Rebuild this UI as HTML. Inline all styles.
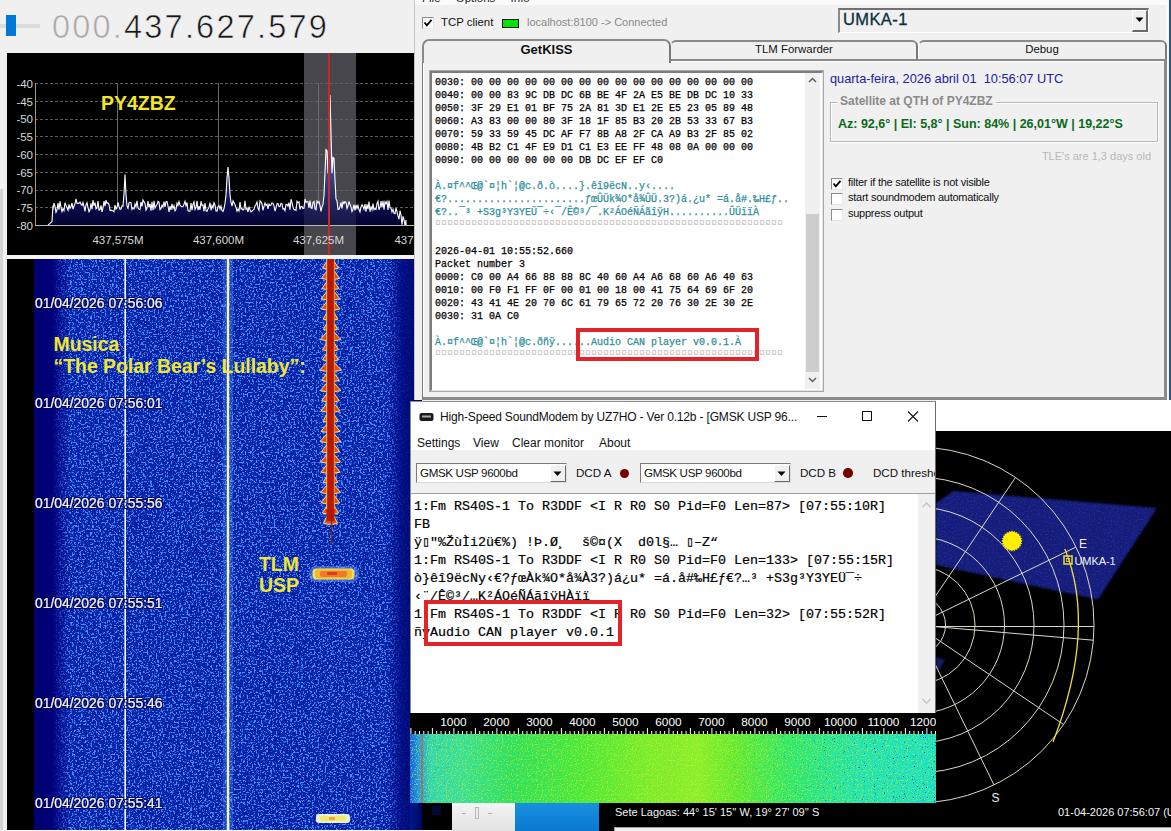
<!DOCTYPE html>
<html><head><meta charset="utf-8">
<style>
*{margin:0;padding:0;box-sizing:border-box}
html,body{width:1171px;height:831px;overflow:hidden;background:#f0f0f0;font-family:"Liberation Sans",sans-serif;position:relative}
.a{position:absolute}
.mono{font-family:"Liberation Mono",monospace;white-space:pre}
.nw{white-space:pre}
</style></head><body>
<!-- SDR header -->
<div class="a" style="left:0;top:189px;width:3px;height:642px;background:#d5d5d5"></div>
<div class="a" style="left:0;top:24px;width:40px;height:4px;background:#dcdcdc"></div>
<div class="a" style="left:6px;top:15px;width:10px;height:21px;background:#0078d7"></div>
<div class="a nw" id="freq" style="left:52px;top:9px;font-size:32.5px;letter-spacing:2.2px;color:#151515;-webkit-text-stroke:0.6px #f0f0f0"><span style="color:#a8a8a8">000.</span>437.627.579</div>
<!-- spectrum -->
<svg class="a" style="left:7px;top:53px" width="407" height="202" viewBox="0 0 407 202">
<defs><linearGradient id="sg" x1="0" y1="40" x2="0" y2="172" gradientUnits="userSpaceOnUse">
<stop offset="0" stop-color="#8ab0e0"/><stop offset="0.55" stop-color="#2a4a90"/><stop offset="0.85" stop-color="#0c0c50"/><stop offset="1" stop-color="#020230"/></linearGradient></defs>
<rect width="407" height="202" fill="#000"/>
<rect x="297" y="0" width="52" height="202" fill="#3a3a3a"/>
<g stroke="#5a5a5a" stroke-width="1" stroke-dasharray="3,2">
<line x1="28" y1="30.5" x2="407" y2="30.5"/><line x1="28" y1="48.5" x2="407" y2="48.5"/><line x1="28" y1="66.5" x2="407" y2="66.5"/><line x1="28" y1="83.5" x2="407" y2="83.5"/><line x1="28" y1="101.5" x2="407" y2="101.5"/><line x1="28" y1="119.5" x2="407" y2="119.5"/><line x1="28" y1="137.5" x2="407" y2="137.5"/><line x1="28" y1="154.5" x2="407" y2="154.5"/>
</g>
<g stroke="#6a6a6a" stroke-width="1"><line x1="110.5" y1="30" x2="110.5" y2="172"/><line x1="211.5" y1="30" x2="211.5" y2="172"/><line x1="311.5" y1="30" x2="311.5" y2="172"/></g>
<path d="M41.0,172.1 L43.0,170.3 L45.0,168.6 L46.0,152.6 L46.0,156.6 L47.0,150.2 L48.0,153.4 L49.0,159.3 L50.0,156.8 L51.0,150.0 L52.0,156.6 L53.0,148.2 L54.0,154.5 L55.0,158.5 L56.0,155.7 L57.0,157.7 L58.0,149.7 L59.0,152.4 L60.0,154.8 L61.0,157.3 L62.0,151.3 L63.0,155.4 L64.0,153.8 L65.0,150.0 L66.0,156.2 L67.0,153.0 L68.0,150.7 L69.0,145.9 L70.0,150.4 L71.0,150.4 L72.0,150.3 L73.0,149.1 L74.0,151.1 L75.0,152.4 L76.0,149.5 L77.0,153.6 L78.0,158.3 L79.0,151.6 L80.0,149.7 L81.0,154.6 L82.0,158.7 L83.0,156.8 L84.0,150.3 L85.0,156.2 L86.0,147.0 L87.0,152.8 L88.0,149.7 L89.0,155.8 L90.0,154.9 L91.0,148.1 L92.0,157.0 L93.0,156.3 L94.0,152.3 L95.0,158.9 L96.0,154.8 L97.0,148.2 L98.0,153.1 L99.0,147.2 L100.0,150.1 L101.0,149.9 L102.0,151.5 L103.0,157.3 L104.0,157.1 L105.0,157.7 L106.0,157.8 L107.0,158.7 L108.0,152.0 L109.0,156.1 L110.0,154.9 L111.0,149.4 L112.0,153.7 L113.0,156.4 L114.0,156.0 L115.0,152.8 L116.0,153.0 L117.0,141.0 L118.0,121.5 L119.0,141.7 L120.0,152.9 L121.0,155.2 L122.0,149.8 L123.0,149.3 L124.0,149.7 L125.0,156.4 L126.0,154.8 L127.0,155.8 L128.0,151.1 L129.0,153.9 L130.0,147.8 L131.0,154.9 L132.0,156.4 L133.0,156.7 L134.0,148.8 L135.0,153.5 L136.0,146.9 L137.0,148.7 L138.0,150.5 L139.0,157.0 L140.0,155.2 L141.0,148.0 L142.0,154.4 L143.0,150.8 L144.0,157.6 L145.0,148.7 L146.0,157.3 L147.0,147.9 L148.0,155.0 L149.0,153.0 L150.0,151.6 L151.0,148.4 L152.0,149.1 L153.0,156.6 L154.0,155.7 L155.0,152.3 L156.0,154.2 L157.0,148.7 L158.0,153.8 L159.0,148.7 L160.0,148.6 L161.0,153.0 L162.0,158.8 L163.0,153.2 L164.0,157.0 L165.0,150.8 L166.0,155.3 L167.0,152.7 L168.0,157.8 L169.0,156.2 L170.0,150.2 L171.0,152.6 L172.0,148.6 L173.0,152.0 L174.0,153.2 L175.0,153.9 L176.0,153.6 L177.0,151.1 L178.0,148.3 L179.0,152.6 L180.0,149.5 L181.0,157.6 L182.0,158.2 L183.0,158.2 L184.0,150.1 L185.0,157.2 L186.0,151.5 L187.0,149.0 L188.0,156.5 L189.0,154.5 L190.0,147.8 L191.0,157.2 L192.0,153.1 L193.0,156.8 L194.0,148.2 L195.0,152.5 L196.0,151.9 L197.0,158.3 L198.0,150.0 L199.0,157.8 L200.0,158.5 L201.0,155.9 L202.0,154.2 L203.0,149.7 L204.0,157.3 L205.0,152.5 L206.0,154.8 L207.0,149.8 L208.0,151.8 L209.0,158.0 L210.0,158.2 L211.0,153.8 L212.0,152.7 L213.0,156.0 L214.0,153.0 L215.0,157.7 L216.0,158.4 L217.0,155.5 L218.0,150.4 L219.0,141.9 L220.0,124.9 L221.0,114.0 L222.0,124.6 L223.0,141.4 L224.0,149.5 L225.0,153.2 L226.0,147.8 L227.0,149.5 L228.0,151.8 L229.0,154.4 L230.0,158.2 L231.0,156.1 L232.0,158.0 L233.0,149.1 L234.0,155.8 L235.0,155.7 L236.0,157.2 L237.0,156.0 L238.0,147.9 L239.0,156.2 L240.0,155.5 L241.0,159.0 L242.0,153.6 L243.0,156.7 L244.0,158.9 L245.0,158.0 L246.0,157.1 L247.0,156.3 L248.0,153.0 L249.0,151.5 L250.0,149.0 L251.0,155.3 L252.0,157.3 L253.0,147.8 L254.0,148.9 L255.0,150.7 L256.0,157.4 L257.0,153.3 L258.0,149.9 L259.0,152.4 L260.0,151.2 L261.0,155.8 L262.0,151.0 L263.0,152.7 L264.0,151.9 L265.0,149.8 L266.0,150.5 L267.0,152.9 L268.0,158.2 L269.0,154.9 L270.0,150.7 L271.0,150.6 L272.0,153.4 L273.0,153.6 L274.0,150.3 L275.0,151.0 L276.0,156.1 L277.0,155.5 L278.0,157.6 L279.0,151.4 L280.0,151.3 L281.0,153.1 L282.0,149.6 L283.0,156.7 L284.0,146.2 L285.0,149.7 L286.0,153.9 L287.0,156.6 L288.0,156.6 L289.0,157.4 L290.0,148.2 L291.0,149.7 L292.0,148.9 L293.0,156.4 L294.0,153.5 L295.0,153.4 L296.0,155.6 L297.0,155.1 L298.0,146.0 L299.0,149.5 L300.0,148.5 L301.0,148.8 L302.0,154.8 L303.0,147.7 L304.0,154.9 L305.0,155.4 L306.0,149.5 L307.0,148.4 L308.0,156.0 L309.0,156.8 L310.0,148.1 L311.0,149.8 L312.0,148.6 L313.0,152.8 L314.0,158.4 L315.0,153.9 L316.0,151.4 L317.0,142.5 L318.0,119.0 L319.0,96.5 L320.0,97.6 L321.0,120.4 L322.0,79.8 L323.0,42.1 L324.0,80.4 L325.0,120.2 L326.0,104.4 L327.0,105.3 L328.0,127.0 L329.0,145.9 L330.0,147.9 L331.0,156.5 L332.0,156.2 L333.0,153.9 L334.0,149.4 L335.0,155.5 L336.0,148.8 L337.0,150.5 L338.0,148.5 L339.0,149.3 L340.0,155.5 L341.0,153.1 L342.0,148.3 L343.0,151.6 L344.0,153.8 L345.0,158.5 L346.0,156.4 L347.0,151.7 L348.0,157.5 L349.0,151.8 L350.0,155.3 L351.0,152.4 L352.0,156.5 L353.0,158.9 L354.0,153.8 L355.0,151.7 L356.0,153.6 L357.0,156.2 L358.0,151.0 L359.0,158.7 L360.0,151.3 L361.0,156.1 L362.0,148.5 L363.0,158.6 L364.0,154.2 L365.0,156.7 L366.0,150.6 L367.0,156.7 L368.0,155.5 L369.0,156.4 L370.0,150.4 L371.0,148.2 L372.0,156.9 L373.0,154.3 L374.0,148.2 L375.0,154.5 L376.0,147.9 L377.0,156.6 L378.0,148.8 L379.0,150.7 L380.0,148.4 L381.0,156.9 L382.0,147.5 L383.0,154.7 L384.0,155.2 L385.0,159.0 L386.0,156.4 L387.0,160.3 L388.0,160.7 L389.0,155.1 L390.0,158.6 L391.0,162.9 L392.0,166.2 L393.0,157.7 L394.0,161.9 L395.0,171.7 L396.0,163.4 L397.0,166.7 L398.0,172.1 L399.0,167.0 L399.0,172.1 L399,172.1 L41,172.1 Z" fill="url(#sg)"/>
<rect x="297" y="0" width="52" height="202" fill="#8080a0" opacity="0.18"/>
<path d="M41.0,172.1 L43.0,170.3 L45.0,168.6 L46.0,152.6 L46.0,156.6 L47.0,150.2 L48.0,153.4 L49.0,159.3 L50.0,156.8 L51.0,150.0 L52.0,156.6 L53.0,148.2 L54.0,154.5 L55.0,158.5 L56.0,155.7 L57.0,157.7 L58.0,149.7 L59.0,152.4 L60.0,154.8 L61.0,157.3 L62.0,151.3 L63.0,155.4 L64.0,153.8 L65.0,150.0 L66.0,156.2 L67.0,153.0 L68.0,150.7 L69.0,145.9 L70.0,150.4 L71.0,150.4 L72.0,150.3 L73.0,149.1 L74.0,151.1 L75.0,152.4 L76.0,149.5 L77.0,153.6 L78.0,158.3 L79.0,151.6 L80.0,149.7 L81.0,154.6 L82.0,158.7 L83.0,156.8 L84.0,150.3 L85.0,156.2 L86.0,147.0 L87.0,152.8 L88.0,149.7 L89.0,155.8 L90.0,154.9 L91.0,148.1 L92.0,157.0 L93.0,156.3 L94.0,152.3 L95.0,158.9 L96.0,154.8 L97.0,148.2 L98.0,153.1 L99.0,147.2 L100.0,150.1 L101.0,149.9 L102.0,151.5 L103.0,157.3 L104.0,157.1 L105.0,157.7 L106.0,157.8 L107.0,158.7 L108.0,152.0 L109.0,156.1 L110.0,154.9 L111.0,149.4 L112.0,153.7 L113.0,156.4 L114.0,156.0 L115.0,152.8 L116.0,153.0 L117.0,141.0 L118.0,121.5 L119.0,141.7 L120.0,152.9 L121.0,155.2 L122.0,149.8 L123.0,149.3 L124.0,149.7 L125.0,156.4 L126.0,154.8 L127.0,155.8 L128.0,151.1 L129.0,153.9 L130.0,147.8 L131.0,154.9 L132.0,156.4 L133.0,156.7 L134.0,148.8 L135.0,153.5 L136.0,146.9 L137.0,148.7 L138.0,150.5 L139.0,157.0 L140.0,155.2 L141.0,148.0 L142.0,154.4 L143.0,150.8 L144.0,157.6 L145.0,148.7 L146.0,157.3 L147.0,147.9 L148.0,155.0 L149.0,153.0 L150.0,151.6 L151.0,148.4 L152.0,149.1 L153.0,156.6 L154.0,155.7 L155.0,152.3 L156.0,154.2 L157.0,148.7 L158.0,153.8 L159.0,148.7 L160.0,148.6 L161.0,153.0 L162.0,158.8 L163.0,153.2 L164.0,157.0 L165.0,150.8 L166.0,155.3 L167.0,152.7 L168.0,157.8 L169.0,156.2 L170.0,150.2 L171.0,152.6 L172.0,148.6 L173.0,152.0 L174.0,153.2 L175.0,153.9 L176.0,153.6 L177.0,151.1 L178.0,148.3 L179.0,152.6 L180.0,149.5 L181.0,157.6 L182.0,158.2 L183.0,158.2 L184.0,150.1 L185.0,157.2 L186.0,151.5 L187.0,149.0 L188.0,156.5 L189.0,154.5 L190.0,147.8 L191.0,157.2 L192.0,153.1 L193.0,156.8 L194.0,148.2 L195.0,152.5 L196.0,151.9 L197.0,158.3 L198.0,150.0 L199.0,157.8 L200.0,158.5 L201.0,155.9 L202.0,154.2 L203.0,149.7 L204.0,157.3 L205.0,152.5 L206.0,154.8 L207.0,149.8 L208.0,151.8 L209.0,158.0 L210.0,158.2 L211.0,153.8 L212.0,152.7 L213.0,156.0 L214.0,153.0 L215.0,157.7 L216.0,158.4 L217.0,155.5 L218.0,150.4 L219.0,141.9 L220.0,124.9 L221.0,114.0 L222.0,124.6 L223.0,141.4 L224.0,149.5 L225.0,153.2 L226.0,147.8 L227.0,149.5 L228.0,151.8 L229.0,154.4 L230.0,158.2 L231.0,156.1 L232.0,158.0 L233.0,149.1 L234.0,155.8 L235.0,155.7 L236.0,157.2 L237.0,156.0 L238.0,147.9 L239.0,156.2 L240.0,155.5 L241.0,159.0 L242.0,153.6 L243.0,156.7 L244.0,158.9 L245.0,158.0 L246.0,157.1 L247.0,156.3 L248.0,153.0 L249.0,151.5 L250.0,149.0 L251.0,155.3 L252.0,157.3 L253.0,147.8 L254.0,148.9 L255.0,150.7 L256.0,157.4 L257.0,153.3 L258.0,149.9 L259.0,152.4 L260.0,151.2 L261.0,155.8 L262.0,151.0 L263.0,152.7 L264.0,151.9 L265.0,149.8 L266.0,150.5 L267.0,152.9 L268.0,158.2 L269.0,154.9 L270.0,150.7 L271.0,150.6 L272.0,153.4 L273.0,153.6 L274.0,150.3 L275.0,151.0 L276.0,156.1 L277.0,155.5 L278.0,157.6 L279.0,151.4 L280.0,151.3 L281.0,153.1 L282.0,149.6 L283.0,156.7 L284.0,146.2 L285.0,149.7 L286.0,153.9 L287.0,156.6 L288.0,156.6 L289.0,157.4 L290.0,148.2 L291.0,149.7 L292.0,148.9 L293.0,156.4 L294.0,153.5 L295.0,153.4 L296.0,155.6 L297.0,155.1 L298.0,146.0 L299.0,149.5 L300.0,148.5 L301.0,148.8 L302.0,154.8 L303.0,147.7 L304.0,154.9 L305.0,155.4 L306.0,149.5 L307.0,148.4 L308.0,156.0 L309.0,156.8 L310.0,148.1 L311.0,149.8 L312.0,148.6 L313.0,152.8 L314.0,158.4 L315.0,153.9 L316.0,151.4 L317.0,142.5 L318.0,119.0 L319.0,96.5 L320.0,97.6 L321.0,120.4 L322.0,79.8 L323.0,42.1 L324.0,80.4 L325.0,120.2 L326.0,104.4 L327.0,105.3 L328.0,127.0 L329.0,145.9 L330.0,147.9 L331.0,156.5 L332.0,156.2 L333.0,153.9 L334.0,149.4 L335.0,155.5 L336.0,148.8 L337.0,150.5 L338.0,148.5 L339.0,149.3 L340.0,155.5 L341.0,153.1 L342.0,148.3 L343.0,151.6 L344.0,153.8 L345.0,158.5 L346.0,156.4 L347.0,151.7 L348.0,157.5 L349.0,151.8 L350.0,155.3 L351.0,152.4 L352.0,156.5 L353.0,158.9 L354.0,153.8 L355.0,151.7 L356.0,153.6 L357.0,156.2 L358.0,151.0 L359.0,158.7 L360.0,151.3 L361.0,156.1 L362.0,148.5 L363.0,158.6 L364.0,154.2 L365.0,156.7 L366.0,150.6 L367.0,156.7 L368.0,155.5 L369.0,156.4 L370.0,150.4 L371.0,148.2 L372.0,156.9 L373.0,154.3 L374.0,148.2 L375.0,154.5 L376.0,147.9 L377.0,156.6 L378.0,148.8 L379.0,150.7 L380.0,148.4 L381.0,156.9 L382.0,147.5 L383.0,154.7 L384.0,155.2 L385.0,159.0 L386.0,156.4 L387.0,160.3 L388.0,160.7 L389.0,155.1 L390.0,158.6 L391.0,162.9 L392.0,166.2 L393.0,157.7 L394.0,161.9 L395.0,171.7 L396.0,163.4 L397.0,166.7 L398.0,172.1 L399.0,167.0 L399.0,172.1" fill="none" stroke="#ffffff" stroke-width="1.1"/>
<line x1="28" y1="172.5" x2="407" y2="172.5" stroke="#b8b8b8" stroke-width="1"/>
<line x1="28.5" y1="30" x2="28.5" y2="172" stroke="#9a9a9a" stroke-width="1"/>
<rect x="321" y="0" width="2" height="202" fill="#c82828"/>
<g font-family="Liberation Sans" font-size="11.5" fill="#d8d8d8" text-anchor="end">
<text x="26" y="34.5">-40</text><text x="26" y="52.5">-45</text><text x="26" y="70">-50</text><text x="26" y="88">-55</text><text x="26" y="105.5">-60</text><text x="26" y="123.5">-65</text><text x="26" y="141">-70</text><text x="26" y="159">-75</text><text x="26" y="176.5">-80</text>
</g>
<g font-family="Liberation Sans" font-size="11.5" fill="#d8d8d8" text-anchor="middle">
<text x="111" y="191">437,575M</text><text x="211.5" y="191">437,600M</text><text x="311.5" y="191">437,625M</text><text x="413" y="191">437,650M</text>
</g>
<text x="94" y="57" font-family="Liberation Sans" font-weight="bold" font-size="19.5" fill="#f2e62a">PY4ZBZ</text>
</svg>
<div class="a" style="left:3px;top:255px;width:411px;height:4px;background:#f4f4f4"></div>
<!-- waterfall -->
<svg class="a" style="left:7px;top:259px" width="415" height="572" viewBox="0 0 415 572">
<defs>
<filter id="nz1" x="0" y="0" width="100%" height="100%" color-interpolation-filters="sRGB">
<feTurbulence type="fractalNoise" baseFrequency="0.55 0.6" numOctaves="2" seed="4"/>
<feColorMatrix type="matrix" values="0 0 0 0 0.30  0 0 0 0 0.55  0 0 0 0 1  10 0 0 0 -5.4"/>
</filter>
<filter id="nz2" x="0" y="0" width="100%" height="100%" color-interpolation-filters="sRGB">
<feTurbulence type="fractalNoise" baseFrequency="0.5 0.55" numOctaves="2" seed="11"/>
<feColorMatrix type="matrix" values="0 0 0 0 0.0  0 0 0 0 0.08  0 0 0 0 0.55  9 0 0 0 -5.0"/>
</filter>
<linearGradient id="wl" x1="0" x2="1"><stop offset="0" stop-color="#00006e"/><stop offset="0.5" stop-color="#00007a"/><stop offset="1" stop-color="#000080" stop-opacity="0"/></linearGradient>
<linearGradient id="wr" x1="0" x2="1"><stop offset="0" stop-color="#000a80" stop-opacity="0"/><stop offset="0.4" stop-color="#000a80" stop-opacity="0.85"/><stop offset="1" stop-color="#000660"/></linearGradient>
<radialGradient id="burst"><stop offset="0" stop-color="#e03010"/><stop offset="0.45" stop-color="#f08020"/><stop offset="0.8" stop-color="#f8e040"/><stop offset="1" stop-color="#f0f0a0" stop-opacity="0"/></radialGradient>
<filter id="ts" x="-5%" y="-20%" width="110%" height="140%"><feMorphology in="SourceAlpha" operator="dilate" radius="1"/><feColorMatrix type="matrix" values="0 0 0 0 0  0 0 0 0 0  0 0 0 0 0.1  0 0 0 0.85 0"/><feMerge><feMergeNode/><feMergeNode in="SourceGraphic"/></feMerge></filter>
</defs>
<rect width="415" height="572" fill="#000"/>
<rect x="27" y="0" width="388" height="572" fill="#0826ac"/>
<rect x="27" y="0" width="388" height="572" filter="url(#nz2)"/>
<rect x="27" y="0" width="388" height="572" filter="url(#nz1)"/>
<rect x="27" y="0" width="36" height="572" fill="url(#wl)"/>
<rect x="380" y="0" width="35" height="572" fill="url(#wr)"/>
<!-- vertical lines -->
<rect x="117.4" y="0" width="1.6" height="572" fill="#fafad8"/>
<rect x="216" y="0" width="10" height="572" fill="#5a98ff" opacity="0.3"/>
<rect x="219.8" y="0" width="2.4" height="572" fill="#e8e040"/>
<rect x="220.4" y="0" width="1.2" height="572" fill="#fffff0"/>
<!-- trail -->
<rect x="316" y="0" width="15" height="266" fill="#4080ff" opacity="0.2"/>
<path d="M321.3,0.0 L325.7,0.0 L331.5,9.2 L326.7,10.2 L320.3,10.2 L315.5,9.2 Z M321.3,10.2 L325.7,10.2 L332.7,19.4 L327.2,20.4 L319.8,20.4 L314.3,19.4 Z M321.3,20.4 L325.7,20.4 L332.0,29.6 L326.9,30.6 L320.1,30.6 L315.0,29.6 Z M321.3,30.6 L325.7,30.6 L332.9,39.8 L327.3,40.8 L319.7,40.8 L314.1,39.8 Z M321.3,40.8 L325.7,40.8 L333.0,50.0 L327.3,51.0 L319.7,51.0 L314.0,50.0 Z M321.3,51.0 L325.7,51.0 L330.8,60.2 L326.4,61.2 L320.6,61.2 L316.2,60.2 Z M321.3,61.2 L325.7,61.2 L330.6,70.4 L326.3,71.4 L320.7,71.4 L316.4,70.4 Z M321.3,71.4 L325.7,71.4 L333.8,80.6 L327.6,81.6 L319.4,81.6 L313.2,80.6 Z M321.3,81.6 L325.7,81.6 L331.5,90.8 L326.7,91.8 L320.3,91.8 L315.5,90.8 Z M321.3,91.8 L325.7,91.8 L331.4,101.0 L326.7,102.0 L320.3,102.0 L315.6,101.0 Z M321.3,102.0 L325.7,102.0 L334.5,111.2 L327.9,112.2 L319.1,112.2 L312.5,111.2 Z M321.3,112.2 L325.7,112.2 L332.4,121.4 L327.1,122.4 L319.9,122.4 L314.6,121.4 Z M321.3,122.4 L325.7,122.4 L333.8,131.6 L327.6,132.6 L319.4,132.6 L313.2,131.6 Z M321.3,132.6 L325.7,132.6 L332.4,141.8 L327.1,142.8 L319.9,142.8 L314.6,141.8 Z M321.3,142.8 L325.7,142.8 L333.1,152.0 L327.3,153.0 L319.7,153.0 L313.9,152.0 Z M321.3,153.0 L325.7,153.0 L331.1,162.2 L326.5,163.2 L320.5,163.2 L315.9,162.2 Z M321.3,163.2 L325.7,163.2 L333.0,172.4 L327.3,173.4 L319.7,173.4 L314.0,172.4 Z M321.3,173.4 L325.7,173.4 L334.0,182.6 L327.7,183.6 L319.3,183.6 L313.0,182.6 Z M321.3,183.6 L325.7,183.6 L332.6,192.8 L327.1,193.8 L319.9,193.8 L314.4,192.8 Z M321.3,193.8 L325.7,193.8 L333.5,203.0 L327.5,204.0 L319.5,204.0 L313.5,203.0 Z M321.3,204.0 L325.7,204.0 L333.2,213.2 L327.4,214.2 L319.6,214.2 L313.8,213.2 Z M321.3,214.2 L325.7,214.2 L330.8,223.4 L326.4,224.4 L320.6,224.4 L316.2,223.4 Z M321.3,224.4 L325.7,224.4 L333.5,233.6 L327.5,234.6 L319.5,234.6 L313.5,233.6 Z M321.3,234.6 L325.7,234.6 L332.9,243.8 L327.2,244.8 L319.8,244.8 L314.1,243.8 Z M321.3,244.8 L325.7,244.8 L331.7,254.0 L326.8,255.0 L320.2,255.0 L315.3,254.0 Z M321.3,255.0 L325.7,255.0 L330.6,264.2 L326.3,265.2 L320.7,265.2 L316.4,264.2 Z" fill="#e04a14" stroke="#f8f0a0" stroke-width="0.9"/>
<rect x="319.5" y="0" width="8" height="262" fill="#b81800"/><rect x="319" y="0" width="1.2" height="250" fill="#f8e060" opacity="0.7"/><rect x="326.8" y="0" width="1.2" height="250" fill="#f8c040" opacity="0.6"/>
<rect x="323.8" y="255" width="1.4" height="30" fill="#802000" opacity="0.8"/>
<!-- bursts -->
<rect x="302" y="307" width="50" height="16" rx="7" fill="#70a8ff" opacity="0.45"/><rect x="305.5" y="309.5" width="42" height="11" rx="4" fill="#f0e060"/><rect x="308" y="310.5" width="37" height="9" rx="3" fill="#f4b830"/><rect x="313" y="312" width="27" height="6" rx="2" fill="#ec7a28"/><rect x="320" y="313" width="10" height="3" fill="#d84020"/>
<rect x="309" y="555" width="34" height="9" rx="3" fill="#e8f0d0"/><rect x="313" y="557" width="26" height="5" rx="2" fill="#f0e870"/><rect x="322" y="558" width="6" height="3" fill="#f0a040"/>
<!-- timestamps -->
<g font-family="Liberation Sans" font-size="13.9" fill="#f0f0f0" filter="url(#ts)">
<text x="28" y="48.8">01/04/2026 07:56:06</text>
<text x="28" y="148.8">01/04/2026 07:56:01</text>
<text x="28" y="248.5">01/04/2026 07:55:56</text>
<text x="28" y="349">01/04/2026 07:55:51</text>
<text x="28" y="448.5">01/04/2026 07:55:46</text>
<text x="28" y="549">01/04/2026 07:55:41</text>
</g>
<g font-family="Liberation Sans" font-weight="bold" font-size="19.4" fill="#f0e630">
<text x="46.5" y="91.5">Musica</text>
<text x="46.5" y="114">“The Polar Bear’s Lullaby”:</text>
<text x="252" y="311.5">TLM</text>
<text x="252" y="333">USP</text>
</g>
</svg>
<!-- GetKISS window -->
<div class="a" style="left:414px;top:0;width:757px;height:400px;background:#f0f0f0;border-left:1px solid #c4c4c4"></div>
<div class="a" style="left:1169px;top:0;width:2px;height:400px;background:#2b4e9a"></div>
<div class="a" style="left:1166px;top:0;width:3px;height:400px;background:#fafafa"></div>
<div class="a" style="left:415px;top:0;width:751px;height:5px;background:#fbfbfb"></div>
<div class="a nw" style="left:422px;top:-8px;font-size:11.5px;color:#222;word-spacing:12px">File Options Info</div>
<!-- toolbar -->
<div class="a" style="left:422px;top:17px;width:12px;height:12px;background:#fff;border-top:1px solid #8a8a8a;border-left:1px solid #8a8a8a;border-right:1px solid #e8e8e8;border-bottom:1px solid #e8e8e8"></div>
<svg class="a" style="left:422px;top:17px" width="12" height="12"><path d="M2.5,5.5 L4.8,8.3 L9.5,2.8" fill="none" stroke="#000" stroke-width="1.8"/></svg>
<div class="a nw" style="left:441px;top:16px;font-size:11.4px;color:#111">TCP client</div>
<div class="a" style="left:502px;top:19px;width:17px;height:9px;background:#00e600;border:1px solid #111"></div>
<div class="a nw" style="left:527px;top:16px;font-size:11px;color:#8a8a8a">localhost:8100 -&gt; Connected</div>
<!-- combobox -->
<div class="a" style="left:838px;top:8px;width:311px;height:25px;background:#f0f0f0;border-top:2px solid #707070;border-left:2px solid #8a8a8a;border-right:1px solid #fff;border-bottom:1px solid #fff"></div>
<div class="a" style="left:1132px;top:10px;width:16px;height:22px;background:#f0f0f0;border-right:2px solid #6a6a6a;border-bottom:2px solid #6a6a6a;border-left:1px solid #fff;border-top:1px solid #fff"></div>
<svg class="a" style="left:1135px;top:17px" width="10" height="6"><path d="M0.5,0.5 L8.5,0.5 L4.5,5 Z" fill="#000"/></svg>
<div class="a nw" style="left:843px;top:10px;font-size:16.5px;letter-spacing:0.4px;color:#0a3040;-webkit-text-stroke:0.3px #0a3040">UMKA-1</div>
<!-- tabs -->
<div class="a" style="left:670px;top:40px;width:248px;height:21px;background:#f0f0f0;border-top:2px solid #8a8a8a;border-left:1px solid #fff;border-right:2px solid #7a7a7a;border-radius:6px 6px 0 0"></div>
<div class="a" style="left:918px;top:40px;width:249px;height:21px;background:#f0f0f0;border-top:2px solid #8a8a8a;border-left:1px solid #fff;border-right:2px solid #7a7a7a;border-radius:6px 6px 0 0"></div>
<div class="a nw" style="left:670px;top:43px;width:248px;text-align:center;font-size:11.4px;color:#111">TLM Forwarder</div>
<div class="a nw" style="left:918px;top:43px;width:248px;text-align:center;font-size:11.4px;color:#111">Debug</div>
<!-- content frame -->
<div class="a" style="left:422px;top:59px;width:745px;height:341px;background:#f0f0f0;border-top:2px solid #8a8a8a;border-left:1px solid #7a7a7a;border-right:3px solid #8a8a8a;border-bottom:3px solid #8a8a8a;box-shadow:inset 1px 1px 0 #fff"></div>
<div class="a" style="left:422px;top:39px;width:249px;height:24px;background:#f0f0f0;border-top:2px solid #8a8a8a;border-left:2px solid #8a8a8a;border-right:2px solid #7a7a7a;border-radius:7px 7px 0 0"></div>
<div class="a" style="left:424px;top:58px;width:245px;height:6px;background:#f0f0f0"></div>
<div class="a nw" style="left:422px;top:42px;width:249px;text-align:center;font-size:13px;font-weight:bold;color:#111">GetKISS</div>
<!-- textbox -->
<div class="a" style="left:430px;top:71px;width:393px;height:320px;background:#fff;border-top:2px solid #7c7c7c;border-left:2px solid #7c7c7c;border-right:1px solid #e4e4e4;border-bottom:1px solid #e4e4e4;outline:1px solid #a8a8a8"></div>
<div class="a" style="left:805px;top:73px;width:15px;height:316px;background:#f0f0f0"></div>
<div class="a" style="left:806px;top:214px;width:13px;height:158px;background:#cdcdcd"></div>
<svg class="a" style="left:805px;top:73px" width="15" height="316"><path d="M4,9 L7.5,5.5 L11,9" fill="none" stroke="#606060" stroke-width="1.5"/><path d="M4,305 L7.5,308.5 L11,305" fill="none" stroke="#606060" stroke-width="1.5"/></svg>
<div class="a mono" style="left:435px;top:75.5px;font-size:10px;line-height:13px;color:#000;-webkit-text-stroke:0.25px">0030: 00 00 00 00 00 00 00 00 00 00 00 00 00 00 00 00
0040: 00 00 83 9C DB DC 6B BE 4F 2A E5 BE DB DC 10 33
0050: 3F 29 E1 01 BF 75 2A 81 3D E1 2E E5 23 05 89 48
0060: A3 83 00 00 80 3F 18 1F 85 B3 20 2B 53 33 67 B3
0070: 59 33 59 45 DC AF F7 8B A8 2F CA A9 B3 2F 85 02
0080: 4B B2 C1 4F E9 D1 C1 E3 EE FF 48 08 0A 00 00 00
0090: 00 00 00 00 00 00 DB DC EF EF C0
<span style="color:#2e8e9a">
À.¤f^^Œ@`¤¦h`¦@c.ð.ò....}.êî9ëcN..y‹....
€?.......................ƒœÛÜk¾O*å¾ÛÜ.3?)á.¿u* =á.å#.‰H£ƒ..
€?..¯³ +S3g³Y3YEÜ¯÷‹¯/Ê©³/¯.K²ÁOéÑÁãîÿH..........ÛÜïïÀ</span>
<span style="color:#c4c4c4;-webkit-text-stroke:0;position:relative;top:-2px">¤¤¤¤¤¤¤¤¤¤¤¤¤¤¤¤¤¤¤¤¤¤¤¤¤¤¤¤¤¤¤¤¤¤¤¤¤¤¤¤¤¤¤¤¤¤¤¤¤¤¤¤¤¤¤¤¤¤</span>

2026-04-01 10:55:52.660
Packet number 3
0000: C0 00 A4 66 88 88 8C 40 60 A4 A6 68 60 A6 40 63
0010: 00 F0 F1 FF 0F 00 01 00 18 00 41 75 64 69 6F 20
0020: 43 41 4E 20 70 6C 61 79 65 72 20 76 30 2E 30 2E
0030: 31 0A C0
<span style="color:#2e8e9a">
À.¤f^^Œ@`¤¦h`¦@c.ðñÿ......Audio CAN player v0.0.1.À</span>
<span style="color:#c4c4c4;-webkit-text-stroke:0;position:relative;top:-2px">¤¤¤¤¤¤¤¤¤¤¤¤¤¤¤¤¤¤¤¤¤¤¤¤¤¤¤¤¤¤¤¤¤¤¤¤¤¤¤¤¤¤¤¤¤¤¤¤¤¤¤¤¤¤¤¤¤¤</span></div>
<div class="a" style="left:576px;top:328px;width:183px;height:33px;border:4px solid #e0242a"></div>
<!-- right panel -->
<div class="a nw" style="left:830px;top:71px;font-size:12.8px;color:#22229a">quarta-feira, 2026 abril 01  10:56:07 UTC</div>
<div class="a" style="left:830px;top:102px;width:328px;height:40px;border:1px solid #b8b8b8;box-shadow:1px 1px 0 #fff inset, 1px 1px 0 #fff"></div>
<div class="a nw" style="left:837px;top:94px;padding:0 3px;background:#f0f0f0;font-size:12px;font-weight:bold;color:#8a8a8a;letter-spacing:0px">Satellite at QTH of PY4ZBZ</div>
<div class="a nw" style="left:838px;top:117px;font-size:12.5px;font-weight:bold;color:#0a6a1a">Az: 92,6° | El: 5,8° | Sun: 84% | 26,01°W | 19,22°S</div>
<div class="a nw" style="left:951px;top:150px;width:200px;text-align:right;font-size:11px;color:#b8b8b8">TLE's are 1,3 days old</div>
<div class="a" style="left:831px;top:178px;width:12px;height:12px;background:#fff;border-top:1px solid #8a8a8a;border-left:1px solid #8a8a8a;border-right:1px solid #e8e8e8;border-bottom:1px solid #e8e8e8"></div>
<svg class="a" style="left:831px;top:178px" width="12" height="12"><path d="M2.5,5.5 L4.8,8.3 L9.5,2.8" fill="none" stroke="#000" stroke-width="1.8"/></svg>
<div class="a" style="left:831px;top:193px;width:12px;height:12px;background:#fff;border-top:1px solid #8a8a8a;border-left:1px solid #8a8a8a;border-right:1px solid #e8e8e8;border-bottom:1px solid #e8e8e8"></div>
<div class="a" style="left:831px;top:209px;width:12px;height:12px;background:#fff;border-top:1px solid #8a8a8a;border-left:1px solid #8a8a8a;border-right:1px solid #e8e8e8;border-bottom:1px solid #e8e8e8"></div>
<div class="a nw" style="left:848px;top:176px;font-size:11px;letter-spacing:-0.25px;color:#111">filter if the satellite is not visible</div>
<div class="a nw" style="left:848px;top:191px;font-size:11px;letter-spacing:-0.25px;color:#111">start soundmodem automatically</div>
<div class="a nw" style="left:848px;top:207px;font-size:11px;letter-spacing:-0.25px;color:#111">suppress output</div>
<!-- polar -->
<div class="a" style="left:936px;top:400px;width:235px;height:31px;background:#fff"></div>
<svg class="a" style="left:936px;top:431px" width="235" height="400" viewBox="0 0 235 400">
<defs><filter id="pb" x="-5%" y="-5%" width="110%" height="110%"><feGaussianBlur stdDeviation="1"/></filter><filter id="pn" x="0" y="0" width="100%" height="100%" color-interpolation-filters="sRGB"><feTurbulence type="fractalNoise" baseFrequency="0.6" numOctaves="1" seed="5"/><feColorMatrix type="matrix" values="0 0 0 0 0.2  0 0 0 0 0.3  0 0 0 0 0.75  3 0 0 0 -1.5"/><feComposite in2="SourceGraphic" operator="in"/></filter></defs>
<rect width="235" height="400" fill="#000"/>
<polygon points="17.5,60 221,77 162,168.5 0,134 0,72" fill="#131d7a" filter="url(#pb)"/>
<polygon points="17.5,60 221,77 162,168.5 0,134 0,72" fill="#000" filter="url(#pn)" opacity="0.5"/>
<polygon points="0,226 9,229 4,238 0,238" fill="#121a60" filter="url(#pb)"/>
<g fill="none" stroke="#d8d8c8" stroke-width="1"><circle cx="-20" cy="194" r="29.5"/><circle cx="-20" cy="194" r="59"/><circle cx="-20" cy="194" r="88.5"/><circle cx="-20" cy="194" r="118"/><circle cx="-20" cy="194" r="148"/><circle cx="-20" cy="194" r="178"/><line x1="-20" y1="194" x2="140.0" y2="116.0"/><line x1="-20" y1="194" x2="157.3" y2="209.2"/><line x1="-20" y1="194" x2="127.6" y2="293.5"/><line x1="-20" y1="194" x2="58.0" y2="354.0"/><line x1="-20" y1="194" x2="79.5" y2="46.4"/><line x1="-20" y1="194" x2="-7.6" y2="16.4"/><line x1="-20" y1="194" x2="-98.0" y2="34.0"/><line x1="-20" y1="194" x2="-167.6" y2="94.5"/><line x1="-20" y1="194" x2="-197.6" y2="181.6"/><line x1="-20" y1="195.5" x2="158" y2="195.5"/></g>
<polygon points="86.5,110.0 84.9,111.2 86.1,112.7 84.3,113.4 85.1,115.2 83.1,115.5 83.4,117.4 81.5,117.1 81.2,119.1 79.4,118.3 78.7,120.1 77.2,118.9 76.0,120.5 74.8,118.9 73.3,120.1 72.6,118.3 70.8,119.1 70.5,117.1 68.6,117.4 68.9,115.5 66.9,115.2 67.7,113.4 65.9,112.7 67.1,111.2 65.5,110.0 67.1,108.8 65.9,107.3 67.7,106.6 66.9,104.8 68.9,104.5 68.6,102.6 70.5,102.9 70.8,100.9 72.6,101.7 73.3,99.9 74.8,101.1 76.0,99.5 77.2,101.1 78.7,99.9 79.4,101.7 81.2,100.9 81.5,102.9 83.4,102.6 83.1,104.5 85.1,104.8 84.3,106.6 86.1,107.3 84.9,108.8" fill="#ffee00"/>
<path d="M128.9000000000001,118 Q161,197 117,311" fill="none" stroke="#f0dc40" stroke-width="1.3"/>
<rect x="128" y="125" width="8" height="8" fill="none" stroke="#f0e020" stroke-width="1.5"/>
<rect x="130.5" y="127.5" width="3" height="3" fill="none" stroke="#f0e020" stroke-width="0.8"/>
<g font-family="Liberation Sans" font-size="12" fill="#f0f0f0">
<text x="143" y="116.5">E</text>
<text x="55.5" y="371">S</text>
<text x="138.5" y="134" font-size="11" letter-spacing="-0.1">UMKA-1</text>
</g>
</svg>
<!-- bottom strip -->
<div class="a" style="left:410px;top:803px;width:761px;height:28px;background:#000"></div>
<div class="a" style="left:410px;top:803px;width:12px;height:28px;background:linear-gradient(90deg,#001890,#000660)"></div>
<div class="a" style="left:432px;top:806px;width:9px;height:9px;background:#000a30"></div>
<div class="a" style="left:452px;top:803px;width:63px;height:28px;background:linear-gradient(180deg,#f4f4f4,#e2e2e2)"></div>
<div class="a" style="left:475px;top:807px;width:4px;height:12px;border:1px solid #b8b8b8"></div>
<div class="a" style="left:462px;top:813px;width:4px;height:1px;background:#b0b0b0"></div>
<div class="a" style="left:488px;top:813px;width:4px;height:1px;background:#b0b0b0"></div>
<div class="a" style="left:515px;top:803px;width:84px;height:28px;background:linear-gradient(180deg,#1890e0,#0a78d0)"></div>
<div class="a" style="left:0;top:830px;width:452px;height:1px;background:#f8f8f8"></div>
<div class="a nw" style="left:615px;top:806px;font-size:11px;color:#f4f4f4">Sete Lagoas: 44° 15' 15'' W, 19° 27' 09'' S</div>
<div class="a nw" style="left:1058px;top:806px;font-size:11px;color:#f4f4f4">01-04-2026 07:56:07 (UTC)</div>
<div class="a" style="left:614px;top:827px;width:557px;height:4px;background:#f0f0f0;border-top:1px solid #a0a0a0;border-left:1px solid #a0a0a0"></div>
<!-- SoundModem -->
<div class="a" style="left:410px;top:401px;width:526px;height:402px;background:#fff;border:1px solid #8c8c8c;border-right:1px solid #6a6a6a"></div>
<svg class="a" style="left:419px;top:411px" width="16" height="12"><rect x="0.5" y="2" width="14" height="8" rx="2" fill="#1a1a1a"/><rect x="3" y="4.5" width="9" height="2" fill="#aaa"/></svg>
<div class="a nw" style="left:440px;top:410px;font-size:12px;letter-spacing:-0.17px;color:#111">High-Speed SoundModem by UZ7HO - Ver 0.12b - [GMSK USP 96...</div>
<svg class="a" style="left:810px;top:405px" width="120" height="24"><line x1="7" y1="11.5" x2="17" y2="11.5" stroke="#111" stroke-width="1"/><rect x="52.5" y="6.5" width="9" height="9" fill="none" stroke="#111" stroke-width="1"/><path d="M98,6.5 L108,16.5 M108,6.5 L98,16.5" stroke="#111" stroke-width="1.1"/></svg>
<div class="a nw" style="left:417px;top:436px;font-size:12px;color:#111;word-spacing:0">Settings</div>
<div class="a nw" style="left:473px;top:436px;font-size:12px;color:#111">View</div>
<div class="a nw" style="left:512px;top:436px;font-size:12px;color:#111">Clear monitor</div>
<div class="a nw" style="left:599px;top:436px;font-size:12px;color:#111">About</div>
<div class="a" style="left:411px;top:450px;width:524px;height:43px;background:#f0f0f0"></div>
<!-- combos -->
<div class="a" style="left:416px;top:463px;width:151px;height:20px;background:#fff;border-top:1px solid #7a7a7a;border-left:1px solid #7a7a7a;border-right:1px solid #dcdcdc;border-bottom:1px solid #dcdcdc"></div>
<div class="a" style="left:550px;top:465px;width:16px;height:17px;background:#f0f0f0;border-right:1px solid #6a6a6a;border-bottom:1px solid #6a6a6a;border-left:1px solid #fff;border-top:1px solid #fff"></div>
<svg class="a" style="left:553px;top:471px" width="10" height="6"><path d="M0.5,0.5 L8.5,0.5 L4.5,5 Z" fill="#000"/></svg>
<div class="a nw" style="left:420px;top:466px;font-size:11.6px;color:#111;letter-spacing:-0.35px">GMSK USP 9600bd</div>
<div class="a nw" style="left:576px;top:466px;font-size:11.6px;color:#111">DCD A</div>
<div class="a" style="left:619.5px;top:468.5px;width:9.5px;height:9.5px;border-radius:50%;background:#7a0000"></div>
<div class="a" style="left:640px;top:463px;width:151px;height:20px;background:#fff;border-top:1px solid #7a7a7a;border-left:1px solid #7a7a7a;border-right:1px solid #dcdcdc;border-bottom:1px solid #dcdcdc"></div>
<div class="a" style="left:774px;top:465px;width:16px;height:17px;background:#f0f0f0;border-right:1px solid #6a6a6a;border-bottom:1px solid #6a6a6a;border-left:1px solid #fff;border-top:1px solid #fff"></div>
<svg class="a" style="left:777px;top:471px" width="10" height="6"><path d="M0.5,0.5 L8.5,0.5 L4.5,5 Z" fill="#000"/></svg>
<div class="a nw" style="left:644px;top:466px;font-size:11.6px;color:#111;letter-spacing:-0.35px">GMSK USP 9600bd</div>
<div class="a nw" style="left:800px;top:466px;font-size:11.6px;color:#111">DCD B</div>
<div class="a" style="left:843.2px;top:468.3px;width:9.5px;height:9.5px;border-radius:50%;background:#7a0000"></div>
<div class="a" style="left:873px;top:466px;width:62px;height:16px;overflow:hidden"><div class="nw" style="font-size:11.6px;color:#111">DCD threshold</div></div>
<!-- monitor -->
<div class="a" style="left:411px;top:493px;width:524px;height:1px;background:#a0a0a0"></div>
<div class="a" style="left:918px;top:494px;width:17px;height:219px;background:#f0f0f0"></div>
<svg class="a" style="left:918px;top:494px" width="17" height="219"><path d="M4.5,13 L8.5,9 L12.5,13" fill="none" stroke="#c4c4c4" stroke-width="1.5"/><path d="M4.5,205 L8.5,209 L12.5,205" fill="none" stroke="#c4c4c4" stroke-width="1.5"/></svg>
<div class="a" style="left:411px;top:494px;width:507px;height:219px;overflow:hidden">
<div class="mono" style="position:absolute;left:3px;top:3.5px;font-size:13.33px;line-height:18px;color:#000;-webkit-text-stroke:0.2px #000">1:Fm RS40S-1 To R3DDF &lt;I R R0 S0 Pid=F0 Len=87&gt; [07:55:10R]
FB
ÿ▯"%ŽùÌi2ü€%) !Þ.Ø¸  š©¤(X  d0l§… ▯–Z“
1:Fm RS40S-1 To R3DDF &lt;I R R0 S0 Pid=F0 Len=133&gt; [07:55:15R]
ò}êî9ëcNy‹€?ƒœÀk¾O*å¾À3?)á¿u* =á.å#‰H£ƒ€?…³ +S3g³Y3YEÜ¯÷
‹¨/Ê©³/…K²ÁOéÑÁãîÿHÀïï
1:Fm RS40S-1 To R3DDF &lt;I R R0 S0 Pid=F0 Len=32&gt; [07:55:52R]
ñÿAudio CAN player v0.0.1</div>
</div>
<div class="a" style="left:423.5px;top:600px;width:198.5px;height:45.5px;border:4px solid #e0242a"></div>
<!-- ruler + waterfall -->
<svg class="a" style="left:410px;top:713px" width="526" height="90" viewBox="0 0 526 90">
<defs>
<linearGradient id="gw" x1="0" x2="1">
<stop offset="0" stop-color="#1060e8"/><stop offset="0.02" stop-color="#20a8e0"/><stop offset="0.04" stop-color="#30d8b0"/><stop offset="0.1" stop-color="#38e098"/><stop offset="0.2" stop-color="#30e060"/><stop offset="0.32" stop-color="#48e840"/><stop offset="0.45" stop-color="#78ec30"/><stop offset="0.55" stop-color="#88ee30"/><stop offset="0.62" stop-color="#60ea38"/><stop offset="0.72" stop-color="#30e870"/><stop offset="0.85" stop-color="#20e4b0"/><stop offset="1" stop-color="#18e0c8"/>
</linearGradient>
<filter id="gn" x="0" y="0" width="100%" height="100%" color-interpolation-filters="sRGB">
<feTurbulence type="fractalNoise" baseFrequency="0.8" numOctaves="1" seed="2"/>
<feColorMatrix type="matrix" values="0 0 0 0 0.9  0 0 0 0 0.95  0 0 0 0 0.1  8 0 0 0 -4.3"/>
</filter>
<filter id="gb" x="0" y="0" width="100%" height="100%" color-interpolation-filters="sRGB">
<feTurbulence type="fractalNoise" baseFrequency="0.9" numOctaves="1" seed="9"/>
<feColorMatrix type="matrix" values="0 0 0 0 0.05  0 0 0 0 0.15  0 0 0 0 0.75  12 0 0 0 -8.1"/>
</filter>
<linearGradient id="gbm" x1="0" x2="1"><stop offset="0" stop-color="#fff" stop-opacity="0.4"/><stop offset="0.15" stop-color="#fff" stop-opacity="0"/><stop offset="0.55" stop-color="#fff" stop-opacity="0"/><stop offset="1" stop-color="#fff" stop-opacity="1"/></linearGradient>
<mask id="bm"><rect width="526" height="90" fill="url(#gbm)"/></mask>
</defs>
<rect width="526" height="21" fill="#000"/>
<rect x="0.4" y="15" width="1" height="6" fill="#fff"/><rect x="4.7" y="18" width="1" height="3" fill="#fff"/><rect x="9.0" y="18" width="1" height="3" fill="#fff"/><rect x="13.3" y="18" width="1" height="3" fill="#fff"/><rect x="17.6" y="18" width="1" height="3" fill="#fff"/><rect x="21.9" y="15" width="1" height="6" fill="#fff"/><rect x="26.2" y="18" width="1" height="3" fill="#fff"/><rect x="30.5" y="18" width="1" height="3" fill="#fff"/><rect x="34.8" y="18" width="1" height="3" fill="#fff"/><rect x="39.1" y="18" width="1" height="3" fill="#fff"/><rect x="43.4" y="15" width="1" height="6" fill="#fff"/><rect x="47.7" y="18" width="1" height="3" fill="#fff"/><rect x="52.0" y="18" width="1" height="3" fill="#fff"/><rect x="56.3" y="18" width="1" height="3" fill="#fff"/><rect x="60.6" y="18" width="1" height="3" fill="#fff"/><rect x="64.9" y="15" width="1" height="6" fill="#fff"/><rect x="69.2" y="18" width="1" height="3" fill="#fff"/><rect x="73.5" y="18" width="1" height="3" fill="#fff"/><rect x="77.8" y="18" width="1" height="3" fill="#fff"/><rect x="82.1" y="18" width="1" height="3" fill="#fff"/><rect x="86.4" y="15" width="1" height="6" fill="#fff"/><rect x="90.7" y="18" width="1" height="3" fill="#fff"/><rect x="95.0" y="18" width="1" height="3" fill="#fff"/><rect x="99.3" y="18" width="1" height="3" fill="#fff"/><rect x="103.6" y="18" width="1" height="3" fill="#fff"/><rect x="107.9" y="15" width="1" height="6" fill="#fff"/><rect x="112.2" y="18" width="1" height="3" fill="#fff"/><rect x="116.5" y="18" width="1" height="3" fill="#fff"/><rect x="120.8" y="18" width="1" height="3" fill="#fff"/><rect x="125.1" y="18" width="1" height="3" fill="#fff"/><rect x="129.4" y="15" width="1" height="6" fill="#fff"/><rect x="133.7" y="18" width="1" height="3" fill="#fff"/><rect x="138.0" y="18" width="1" height="3" fill="#fff"/><rect x="142.3" y="18" width="1" height="3" fill="#fff"/><rect x="146.6" y="18" width="1" height="3" fill="#fff"/><rect x="150.9" y="15" width="1" height="6" fill="#fff"/><rect x="155.2" y="18" width="1" height="3" fill="#fff"/><rect x="159.5" y="18" width="1" height="3" fill="#fff"/><rect x="163.8" y="18" width="1" height="3" fill="#fff"/><rect x="168.1" y="18" width="1" height="3" fill="#fff"/><rect x="172.4" y="15" width="1" height="6" fill="#fff"/><rect x="176.7" y="18" width="1" height="3" fill="#fff"/><rect x="181.0" y="18" width="1" height="3" fill="#fff"/><rect x="185.3" y="18" width="1" height="3" fill="#fff"/><rect x="189.6" y="18" width="1" height="3" fill="#fff"/><rect x="193.9" y="15" width="1" height="6" fill="#fff"/><rect x="198.2" y="18" width="1" height="3" fill="#fff"/><rect x="202.5" y="18" width="1" height="3" fill="#fff"/><rect x="206.8" y="18" width="1" height="3" fill="#fff"/><rect x="211.1" y="18" width="1" height="3" fill="#fff"/><rect x="215.4" y="15" width="1" height="6" fill="#fff"/><rect x="219.7" y="18" width="1" height="3" fill="#fff"/><rect x="224.0" y="18" width="1" height="3" fill="#fff"/><rect x="228.3" y="18" width="1" height="3" fill="#fff"/><rect x="232.6" y="18" width="1" height="3" fill="#fff"/><rect x="236.9" y="15" width="1" height="6" fill="#fff"/><rect x="241.2" y="18" width="1" height="3" fill="#fff"/><rect x="245.5" y="18" width="1" height="3" fill="#fff"/><rect x="249.8" y="18" width="1" height="3" fill="#fff"/><rect x="254.1" y="18" width="1" height="3" fill="#fff"/><rect x="258.4" y="15" width="1" height="6" fill="#fff"/><rect x="262.7" y="18" width="1" height="3" fill="#fff"/><rect x="267.0" y="18" width="1" height="3" fill="#fff"/><rect x="271.3" y="18" width="1" height="3" fill="#fff"/><rect x="275.6" y="18" width="1" height="3" fill="#fff"/><rect x="279.9" y="15" width="1" height="6" fill="#fff"/><rect x="284.2" y="18" width="1" height="3" fill="#fff"/><rect x="288.5" y="18" width="1" height="3" fill="#fff"/><rect x="292.8" y="18" width="1" height="3" fill="#fff"/><rect x="297.1" y="18" width="1" height="3" fill="#fff"/><rect x="301.4" y="15" width="1" height="6" fill="#fff"/><rect x="305.7" y="18" width="1" height="3" fill="#fff"/><rect x="310.0" y="18" width="1" height="3" fill="#fff"/><rect x="314.3" y="18" width="1" height="3" fill="#fff"/><rect x="318.6" y="18" width="1" height="3" fill="#fff"/><rect x="322.9" y="15" width="1" height="6" fill="#fff"/><rect x="327.2" y="18" width="1" height="3" fill="#fff"/><rect x="331.5" y="18" width="1" height="3" fill="#fff"/><rect x="335.8" y="18" width="1" height="3" fill="#fff"/><rect x="340.1" y="18" width="1" height="3" fill="#fff"/><rect x="344.4" y="15" width="1" height="6" fill="#fff"/><rect x="348.7" y="18" width="1" height="3" fill="#fff"/><rect x="353.0" y="18" width="1" height="3" fill="#fff"/><rect x="357.3" y="18" width="1" height="3" fill="#fff"/><rect x="361.6" y="18" width="1" height="3" fill="#fff"/><rect x="365.9" y="15" width="1" height="6" fill="#fff"/><rect x="370.2" y="18" width="1" height="3" fill="#fff"/><rect x="374.5" y="18" width="1" height="3" fill="#fff"/><rect x="378.8" y="18" width="1" height="3" fill="#fff"/><rect x="383.1" y="18" width="1" height="3" fill="#fff"/><rect x="387.4" y="15" width="1" height="6" fill="#fff"/><rect x="391.7" y="18" width="1" height="3" fill="#fff"/><rect x="396.0" y="18" width="1" height="3" fill="#fff"/><rect x="400.3" y="18" width="1" height="3" fill="#fff"/><rect x="404.6" y="18" width="1" height="3" fill="#fff"/><rect x="408.9" y="15" width="1" height="6" fill="#fff"/><rect x="413.2" y="18" width="1" height="3" fill="#fff"/><rect x="417.5" y="18" width="1" height="3" fill="#fff"/><rect x="421.8" y="18" width="1" height="3" fill="#fff"/><rect x="426.1" y="18" width="1" height="3" fill="#fff"/><rect x="430.4" y="15" width="1" height="6" fill="#fff"/><rect x="434.7" y="18" width="1" height="3" fill="#fff"/><rect x="439.0" y="18" width="1" height="3" fill="#fff"/><rect x="443.3" y="18" width="1" height="3" fill="#fff"/><rect x="447.6" y="18" width="1" height="3" fill="#fff"/><rect x="451.9" y="15" width="1" height="6" fill="#fff"/><rect x="456.2" y="18" width="1" height="3" fill="#fff"/><rect x="460.5" y="18" width="1" height="3" fill="#fff"/><rect x="464.8" y="18" width="1" height="3" fill="#fff"/><rect x="469.1" y="18" width="1" height="3" fill="#fff"/><rect x="473.4" y="15" width="1" height="6" fill="#fff"/><rect x="477.7" y="18" width="1" height="3" fill="#fff"/><rect x="482.0" y="18" width="1" height="3" fill="#fff"/><rect x="486.3" y="18" width="1" height="3" fill="#fff"/><rect x="490.6" y="18" width="1" height="3" fill="#fff"/><rect x="494.9" y="15" width="1" height="6" fill="#fff"/><rect x="499.2" y="18" width="1" height="3" fill="#fff"/><rect x="503.5" y="18" width="1" height="3" fill="#fff"/><rect x="507.8" y="18" width="1" height="3" fill="#fff"/><rect x="512.1" y="18" width="1" height="3" fill="#fff"/><rect x="516.4" y="15" width="1" height="6" fill="#fff"/><rect x="520.7" y="18" width="1" height="3" fill="#fff"/><rect x="525.0" y="18" width="1" height="3" fill="#fff"/><g font-family="Liberation Sans" font-size="11.8" fill="#fff" text-anchor="middle"><text x="43.4" y="13">1000</text><text x="86.4" y="13">2000</text><text x="129.4" y="13">3000</text><text x="172.4" y="13">4000</text><text x="215.4" y="13">5000</text><text x="258.4" y="13">6000</text><text x="301.4" y="13">7000</text><text x="344.4" y="13">8000</text><text x="387.4" y="13">9000</text><text x="430.4" y="13">10000</text><text x="473.4" y="13">11000</text><text x="516.4" y="13">12000</text></g>
<rect x="0" y="21" width="526" height="69" fill="url(#gw)"/>
<rect x="0" y="21" width="526" height="69" filter="url(#gn)" opacity="0.5"/>
<rect x="0" y="21" width="526" height="69" filter="url(#gb)" mask="url(#bm)"/>
<rect x="11" y="21" width="2" height="69" fill="#f04010" opacity="0.55"/>
</svg>
</body></html>
